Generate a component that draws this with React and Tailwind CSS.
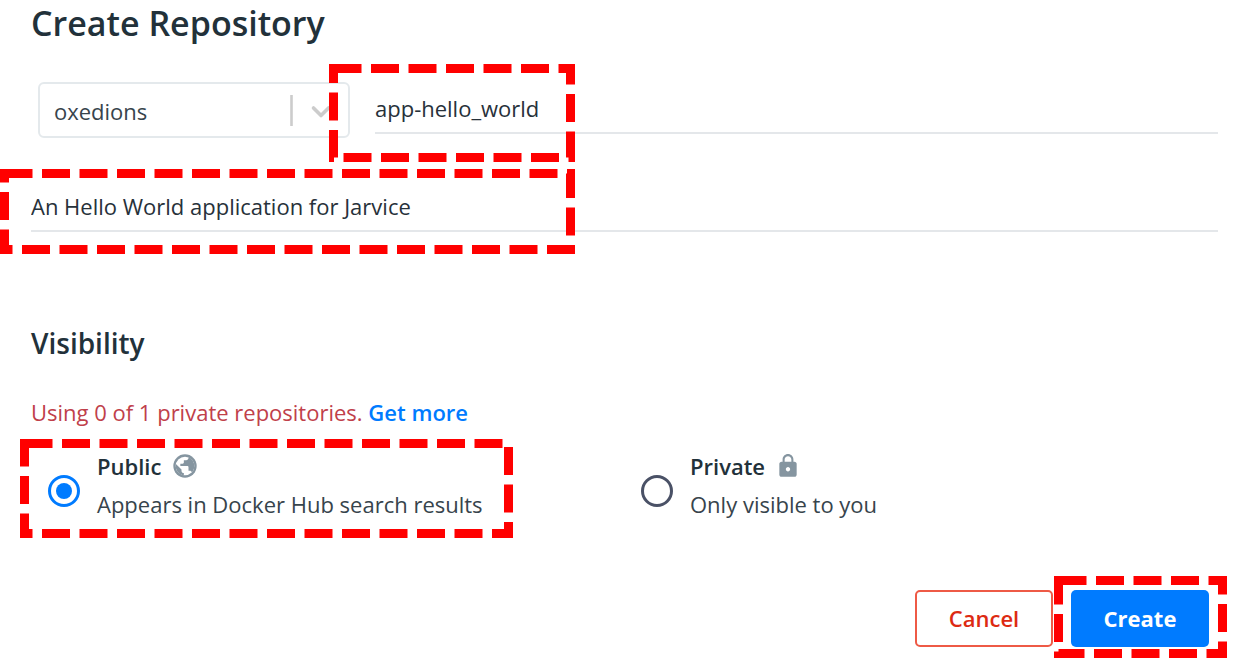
import React from "react";
import { MdLock } from "react-icons/md";

function GlobeIcon() {
  return (
    <svg aria-hidden="true" viewBox="0 0 24 24" className="size-7 text-[#8595a0]" fill="currentColor">
      <circle cx="12" cy="12" r="10" />
      <circle cx="12" cy="12" r="8" fill="#ffffff" />
      <path d="M11 19.93C7.05 19.44 4 16.08 4 12c0-.62.08-1.21.21-1.79L9 15v1c0 1.1.9 2 2 2v1.93zM17.9 17.39c-.26-.81-1-1.39-1.9-1.39h-1v-3c0-.55-.45-1-1-1H8v-2h2c.55 0 1-.45 1-1V7h2c1.1 0 2-.9 2-2v-.41c2.93 1.19 5 4.06 5 7.41 0 2.08-.8 3.97-2.1 5.39z" />
    </svg>
  );
}

function Highlight({ width, height, className }) {
  return (
    <svg
      aria-hidden="true"
      width={width}
      height={height}
      className={`pointer-events-none absolute z-10 max-w-none ${className}`}
    >
      <rect
        x="4.5"
        y="4.5"
        width={width - 9}
        height={height - 9}
        fill="none"
        stroke="#ff0000"
        strokeWidth="9"
        strokeDasharray="28 9.5"
      />
    </svg>
  );
}

function VisibilityOption({ id, title, text, icon, defaultChecked }) {
  return (
    <div className="flex items-center gap-[17px]">
      <input
        type="radio"
        name="visibility"
        id={id}
        defaultChecked={defaultChecked}
        className="mt-3 size-8 shrink-0 appearance-none rounded-full border-3 border-[#4a5166] p-[5px] checked:border-[#007bff] checked:bg-[#007bff] bg-clip-content"
      />
      <label htmlFor={id} className="block">
        <span className="flex h-[38px] items-center gap-2.5 font-semibold text-[#22313a]">
          {title}
          {icon}
        </span>
        <span className="block leading-[38px] text-[#37444c]">{text}</span>
      </label>
    </div>
  );
}

export default function App() {
  return (
    <main className="overflow-hidden bg-white pr-5 pl-[31px] font-['Open_Sans',sans-serif] text-[22px] text-[#27313a]">
      <form onSubmit={(e) => e.preventDefault()}>
        <h1 className="text-[34px] leading-[46px] font-semibold text-[#22313a]">Create Repository</h1>

        <div className="mt-9 flex items-start gap-[25px] pl-[7px]">
          <div className="relative w-[312px] shrink-0">
            <select
              aria-label="Namespace"
              className="h-14 w-full appearance-none rounded-md border-2 border-[#e4e9ec] bg-white pt-0.5 pl-3.5 text-[#37444c]"
            >
              <option>oxedions</option>
            </select>
            <svg
              aria-hidden="true"
              viewBox="0 0 60 56"
              className="pointer-events-none absolute top-0 right-0 h-14 w-[60px]"
              fill="none"
              stroke="#cccccc"
            >
              <path d="M1.5 13v31" strokeWidth="2.6" />
              <path d="M23.5 26l7.5 7.5 7.5-7.5" strokeWidth="3.6" strokeLinecap="round" strokeLinejoin="round" />
            </svg>
          </div>
          <div className="relative min-w-0 flex-1">
            <input
              aria-label="Repository name"
              defaultValue="app-hello_world"
              className="h-[52px] w-full border-b-2 border-[#e4e7ea] bg-transparent pt-0.5 outline-none"
            />
            <Highlight width={246} height={98} className="-top-[18px] -left-[46px]" />
          </div>
        </div>

        <div className="relative mt-11">
          <input
            aria-label="Description"
            defaultValue="An Hello World application for Jarvice"
            className="h-[50px] w-full border-b-2 border-[#e4e7ea] bg-transparent outline-none"
          />
          <Highlight width={575} height={85} className="-top-[13px] -left-[31px]" />
        </div>

        <h2 className="mt-[91px] text-[28px] leading-10 font-semibold text-[#22313a]">Visibility</h2>
        <p className="mt-[33px] leading-[32px] text-[#c0404a]">
          Using 0 of 1 private repositories.{" "}
          <a href="#upgrade" className="font-semibold text-[#007bff]">
            Get more
          </a>
        </p>

        <div className="relative mt-[19px] grid grid-cols-2 pl-[17px] pb-px">
          <VisibilityOption
            id="public"
            title="Public"
            text="Appears in Docker Hub search results"
            defaultChecked
            icon={<GlobeIcon />}
          />
          <div className="pl-2">
            <VisibilityOption
              id="private"
              title="Private"
              text="Only visible to you"
              icon={<MdLock aria-hidden="true" className="size-[26px] text-[#8595a0]" />}
            />
          </div>
          <Highlight width={493} height={99} className="-top-[8px] -left-[11px]" />
        </div>

        <div className="mt-[66px] flex justify-end gap-[18px] pr-[9px] pb-[11px] font-semibold">
          <button type="button" className="h-[57px] w-[138px] rounded-[5px] border-2 border-[#ee5a46] text-[#dd2a12]">
            Cancel
          </button>
          <div className="relative">
            <button type="submit" className="h-[57px] w-[138px] rounded-[5px] bg-[#007bff] font-bold text-white">
              Create
            </button>
            <Highlight width={173} height={82} className="-top-[14px] -left-[17px]" />
          </div>
        </div>
      </form>
    </main>
  );
}
